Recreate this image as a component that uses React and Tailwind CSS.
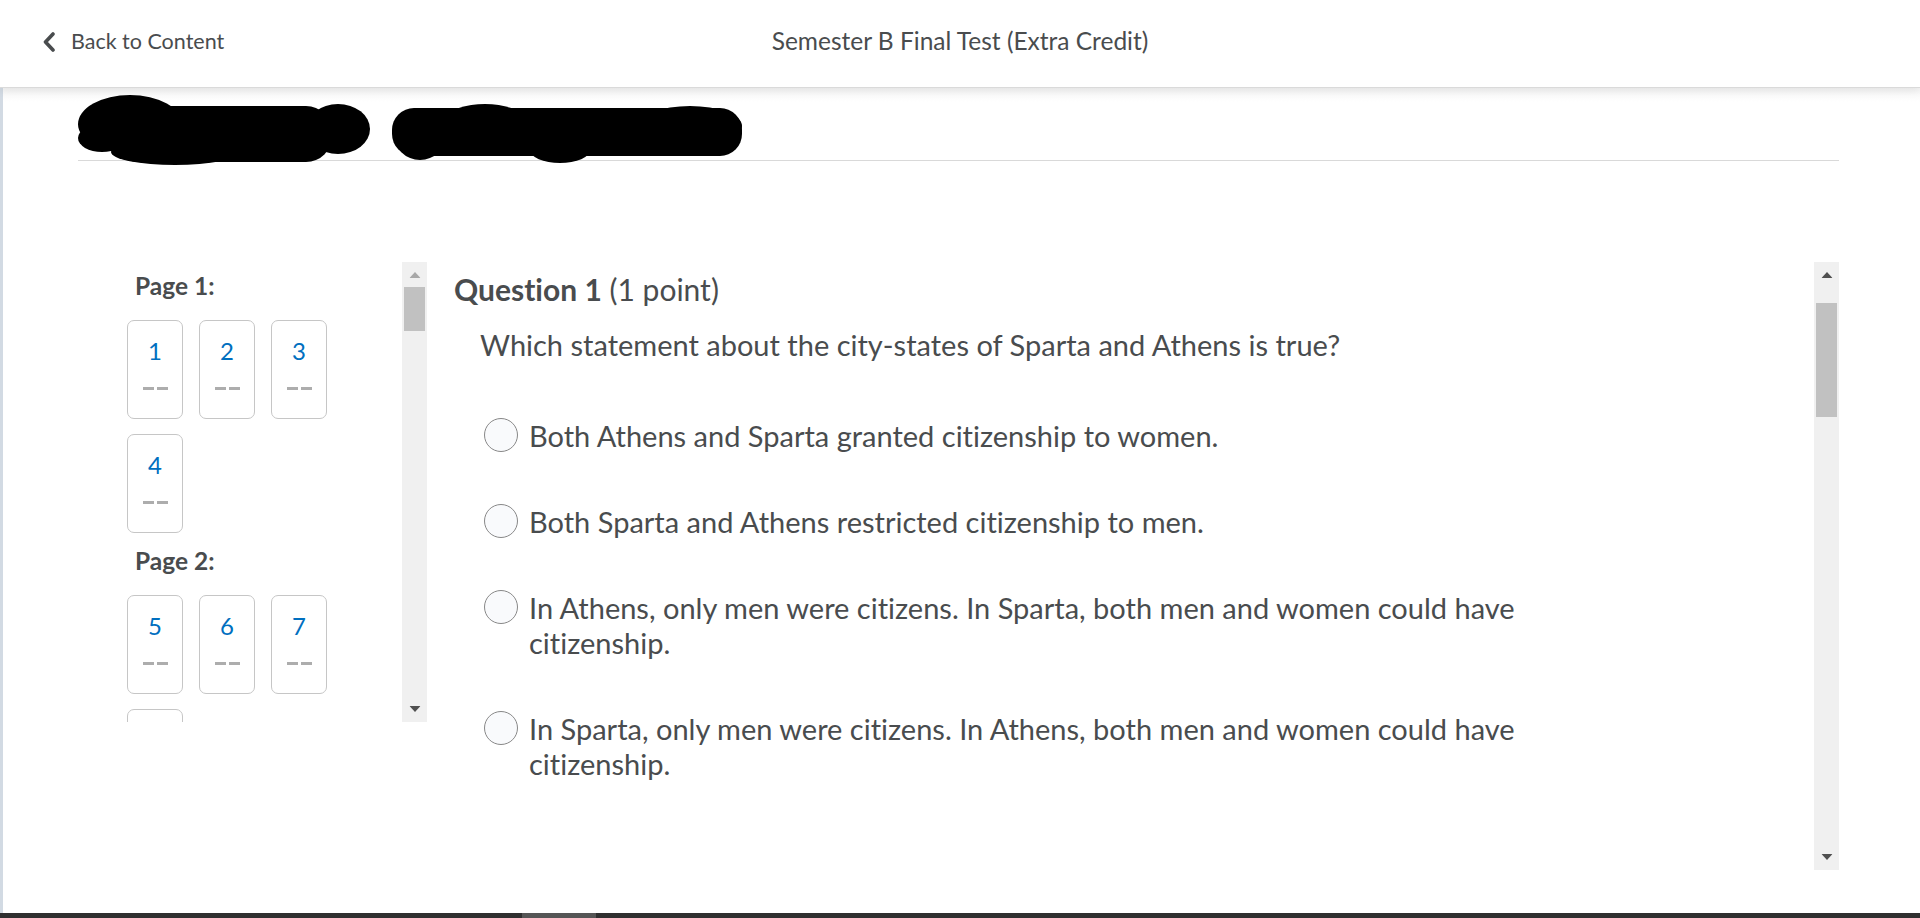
import React from "react";

const options = [
  "Both Athens and Sparta granted citizenship to women.",
  "Both Sparta and Athens restricted citizenship to men.",
  "In Athens, only men were citizens. In Sparta, both men and women could have citizenship.",
  "In Sparta, only men were citizens. In Athens, both men and women could have citizenship.",
];

const pages = [
  { label: "Page 1:", items: [1, 2, 3, 4] },
  { label: "Page 2:", items: [5, 6, 7, 8] },
];

function Scrollbar({ thumbTop, thumbHeight, upColor }) {
  return (
    <div className="relative w-[25px] shrink-0 bg-[#f0f0f0]">
      <svg className="absolute left-1/2 top-[10px] -translate-x-1/2" width="11" height="6" viewBox="0 0 11 6">
        <path d="M0 6 L5.5 0 L11 6 Z" fill={upColor} />
      </svg>
      <div
        className="absolute left-[2px] right-[2px] bg-[#c1c1c1]"
        style={{ top: thumbTop, height: thumbHeight }}
      />
      <svg className="absolute left-1/2 bottom-[10px] -translate-x-1/2" width="11" height="6" viewBox="0 0 11 6">
        <path d="M0 0 L5.5 6 L11 0 Z" fill="#505050" />
      </svg>
    </div>
  );
}

function QuestionBox({ n }) {
  return (
    <div className="w-[56px] h-[99px] border border-[#c6c6c6] rounded-[7px] flex flex-col items-center pt-[15px] bg-white">
      <span className="text-[24px] leading-[30px] text-[#006fbf]">{n}</span>
      <div className="mt-[21px] flex gap-[3px]">
        <span className="w-[11px] h-[3px] bg-[#adadad]" />
        <span className="w-[11px] h-[3px] bg-[#adadad]" />
      </div>
    </div>
  );
}

function Redactions() {
  return (
    <svg width="680" height="72" viewBox="78 94 680 72" className="block">
      <g fill="#000">
        <ellipse cx="130" cy="124" rx="52" ry="29" />
        <ellipse cx="102" cy="138" rx="24" ry="14" />
        <rect x="112" y="106" width="220" height="56" rx="26" />
        <ellipse cx="175" cy="152" rx="64" ry="13" />
        <ellipse cx="338" cy="129" rx="32" ry="25" />
        <rect x="392" y="108" width="350" height="48" rx="22" />
        <ellipse cx="420" cy="134" rx="26" ry="26" />
        <ellipse cx="485" cy="117" rx="36" ry="13" />
        <ellipse cx="560" cy="150" rx="30" ry="13" />
        <ellipse cx="690" cy="126" rx="52" ry="20" />
      </g>
    </svg>
  );
}

export default function App() {
  return (
    <div className="w-[1920px] h-[918px] bg-white overflow-hidden flex flex-col font-['Lato',sans-serif] [font-variant-ligatures:none] text-[#494c4e]">
      {/* Header */}
      <header className="relative z-10 h-[88px] shrink-0 flex items-center pb-[4px] border-b border-[#dadada] shadow-[0_3px_8px_rgba(0,0,0,0.08)] bg-white">
        <div className="flex items-center pl-[42px] w-[560px]">
          <svg width="14" height="20" viewBox="0 0 14 20" className="mr-[15px]">
            <path d="M11 2 L3.5 10 L11 18" fill="none" stroke="#494c4e" strokeWidth="3.6" strokeLinecap="round" strokeLinejoin="round" />
          </svg>
          <span className="text-[21.5px]">Back to Content</span>
        </div>
        <div className="flex-1 text-center pr-[560px]">
          <span className="text-[24.5px]">Semester B Final Test (Extra Credit)</span>
        </div>
      </header>

      {/* Body */}
      <div className="flex-1 flex flex-col border-l-[3px] border-[#d2dae3] bg-gradient-to-b from-[#f6f6f6] to-white to-[14px]">
        <div className="ml-[75px] mr-[81px] pt-[6px] border-b border-[#d9d9d9] h-[73px]">
          <Redactions />
        </div>

        <div className="flex mt-[101px]">
          {/* Question list */}
          <div className="ml-[124px] w-[300px] h-[460px] flex">
            <div className="flex-1 overflow-hidden pt-[10px]">
              {pages.map((page, i) => (
                <div key={page.label} className={i > 0 ? "mt-[14px]" : ""}>
                  <div className="pl-[8px] text-[24.5px] leading-[28px] font-bold mb-[20px]">
                    {page.label}
                  </div>
                  <div className="grid grid-cols-[repeat(3,56px)] gap-x-[16px] gap-y-[15px]">
                    {page.items.map((n) => (
                      <QuestionBox key={n} n={n} />
                    ))}
                  </div>
                </div>
              ))}
            </div>
            <Scrollbar thumbTop={25} thumbHeight={44} upColor="#a8a8a8" />
          </div>

          {/* Question content */}
          <div className="ml-[27px] mr-[81px] flex-1 h-[608px] flex">
            <div className="flex-1 overflow-hidden pt-[9px]">
              <h2 className="text-[30px] leading-[36px]">
                <span className="font-bold">Question 1</span> (1 point)
              </h2>
              <p className="ml-[26px] mt-[20px] text-[29px] leading-[35px]">
                Which statement about the city-states of Sparta and Athens is true?
              </p>
              <div className="ml-[30px] mt-[56px] flex flex-col gap-[51px]">
                {options.map((opt) => (
                  <label key={opt} className="flex items-start">
                    <span className="w-[34px] h-[34px] shrink-0 rounded-full border border-[#888] bg-[#f9fafc]" />
                    <span className="ml-[11px] w-[1030px] text-[29px] leading-[35px]">{opt}</span>
                  </label>
                ))}
              </div>
            </div>
            <Scrollbar thumbTop={41} thumbHeight={114} upColor="#505050" />
          </div>
        </div>
      </div>

      <div className="h-[5px] shrink-0 bg-[#2f2f2f] flex">
        <div className="ml-[522px] w-[74px] bg-[#555]" />
      </div>
    </div>
  );
}
